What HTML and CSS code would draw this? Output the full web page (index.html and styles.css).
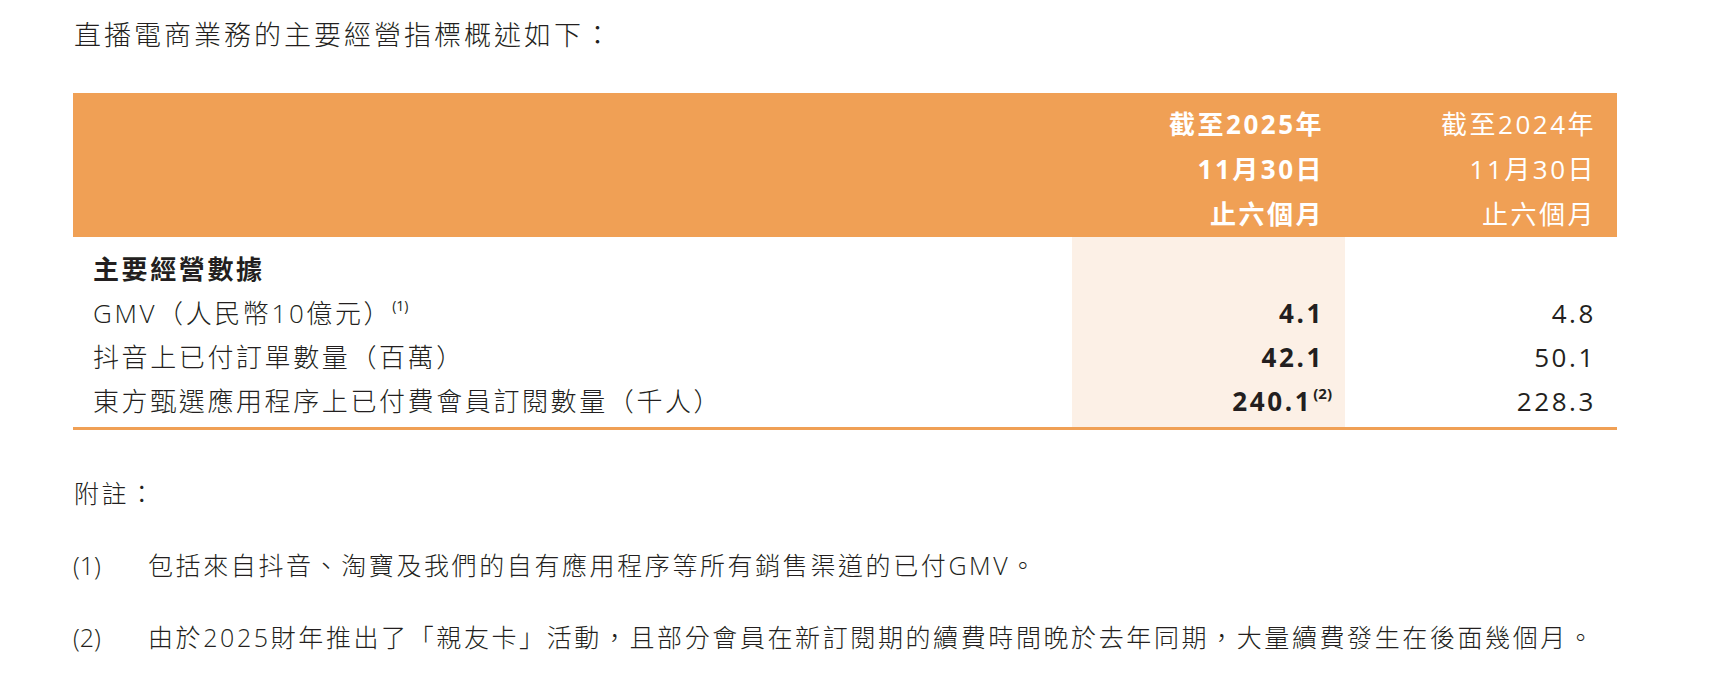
FILE: index.html
```html
<!DOCTYPE html>
<html lang="zh-Hant">
<head>
<meta charset="utf-8">
<title>直播電商業務</title>
<link rel="stylesheet" href="styles.css">
</head>
<body>
<main class="page">
  <p class="intro">直播電商業務的主要經營指標概述如下：</p>
  <table class="kpi">
    <thead>
      <tr>
        <th class="label-head"></th>
        <th class="num-head cur">截至2025年<br>11月30日<br>止六個月</th>
        <th class="num-head">截至2024年<br>11月30日<br>止六個月</th>
      </tr>
    </thead>
    <tbody>
      <tr class="first">
        <td class="label section">主要經營數據</td>
        <td class="num cur"></td>
        <td class="num"></td>
      </tr>
      <tr>
        <td class="label">GMV（人民幣10億元）<sup class="note-ref">(1)</sup></td>
        <td class="num cur">4.1</td>
        <td class="num">4.8</td>
      </tr>
      <tr>
        <td class="label">抖音上已付訂單數量（百萬）</td>
        <td class="num cur">42.1</td>
        <td class="num">50.1</td>
      </tr>
      <tr class="last">
        <td class="label">東方甄選應用程序上已付費會員訂閱數量（千人）</td>
        <td class="num cur">240.1<sup class="note-ref hang">(2)</sup></td>
        <td class="num">228.3</td>
      </tr>
    </tbody>
  </table>
  <section class="notes">
    <p class="notes-title">附註：</p>
    <div class="note"><span class="note-no">(1)</span><span class="note-text">包括來自抖音、淘寶及我們的自有應用程序等所有銷售渠道的已付GMV。</span></div>
    <div class="note"><span class="note-no">(2)</span><span class="note-text">由於2025財年推出了「親友卡」活動，且部分會員在新訂閱期的續費時間晚於去年同期，大量續費發生在後面幾個月。</span></div>
  </section>
</main>
</body>
</html>
```

FILE: styles.css
```css
html, body {
  margin: 0;
  padding: 0;
  background: #ffffff;
}

body {
  font-family: "Open Sans", "Noto Sans CJK TC", "Noto Sans CJK SC", sans-serif;
  color: #231f20;
}

.page {
  padding: 12px 0 0 73px;
  width: 1544px;
}

.intro {
  margin: 0 0 36px 1px;
  font-size: 27px;
  line-height: 45px;
  letter-spacing: 3px;
  font-weight: 300;
}

.kpi {
  width: 1544px;
  border-collapse: collapse;
  border-spacing: 0;
  table-layout: fixed;
  border-bottom: 3px solid #f0a055;
}

.kpi th,
.kpi td {
  padding: 0;
  box-sizing: border-box;
}

.kpi thead th {
  background: #f0a055;
  color: #ffffff;
  font-size: 26px;
  line-height: 45px;
  letter-spacing: 2.5px;
  font-weight: 400;
  padding-top: 9px;
  vertical-align: top;
}

.label-head {
  width: 999px;
}

.num-head {
  width: 272px;
  text-align: right;
  padding-right: 21px !important;
}

.num-head.cur {
  width: 273px;
  font-weight: 700 !important;
}

.kpi td {
  font-size: 26px;
  line-height: 44px;
  letter-spacing: 2.6px;
  vertical-align: top;
}

.label {
  padding-left: 20px !important;
  font-weight: 300;
  white-space: nowrap;
}

.label.section {
  font-weight: 700;
}

.num {
  text-align: right;
  padding-right: 21px !important;
}

.num.cur {
  background: #fcf0e6;
  font-weight: 700;
}

.kpi tr.first td {
  padding-top: 10px;
}

.kpi tr.last td {
  padding-bottom: 4px;
}

.note-ref {
  font-size: 14px;
  line-height: 0;
  letter-spacing: 0;
  vertical-align: 0;
  position: relative;
  top: -12px;
  margin-left: 0;
  font-weight: 400;
}

.note-ref.hang {
  font-size: 15px;
  font-weight: 700;
  margin-left: 1px;
  margin-right: -8px;
}

.notes {
  margin-top: 41px;
  font-size: 25px;
  line-height: 45px;
  letter-spacing: 2.6px;
  font-weight: 300;
}

.notes-title {
  margin: 0 0 0 1px;
}

.note {
  display: grid;
  grid-template-columns: 75px 1fr;
  margin-top: 27px;
}

.note-no {
  letter-spacing: 0;
}
```
